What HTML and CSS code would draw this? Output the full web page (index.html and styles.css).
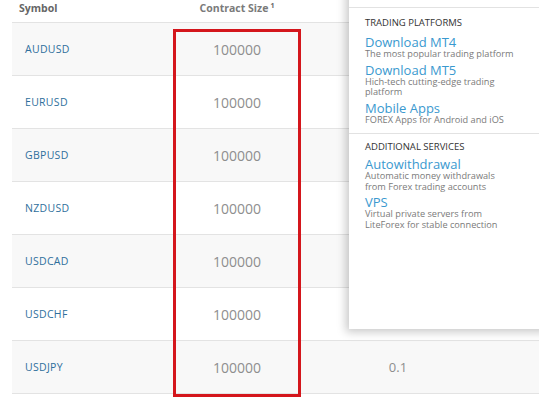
FILE: index.html
```html
<!DOCTYPE html>
<html>
<head>
<meta charset="utf-8">
<link rel="stylesheet" href="styles.css">
</head>
<body>
<div class="page">
  <div class="table">
    <div class="row head">
      <div class="c1">Symbol</div>
      <div class="c2">Contract Size<sup>1</sup></div>
      <div class="c3"></div>
    </div>
    <div class="row odd"><div class="c1 sym">AUDUSD</div><div class="c2 num">100000</div><div class="c3"></div></div>
    <div class="row"><div class="c1 sym">EURUSD</div><div class="c2 num">100000</div><div class="c3"></div></div>
    <div class="row odd"><div class="c1 sym">GBPUSD</div><div class="c2 num">100000</div><div class="c3"></div></div>
    <div class="row"><div class="c1 sym">NZDUSD</div><div class="c2 num">100000</div><div class="c3"></div></div>
    <div class="row odd"><div class="c1 sym">USDCAD</div><div class="c2 num">100000</div><div class="c3"></div></div>
    <div class="row"><div class="c1 sym">USDCHF</div><div class="c2 num">100000</div><div class="c3"></div></div>
    <div class="row odd"><div class="c1 sym">USDJPY</div><div class="c2 num">100000</div><div class="c3 num small">0.1</div></div>
  </div>

  <div class="highlight"></div>

  <div class="menu">
    <div class="menu-top"><span>Trading Terms</span></div>
    <div class="section">
      <div class="sec-title">TRADING PLATFORMS</div>
      <div class="item"><div class="link">Download MT4</div><div class="desc">The most popular trading platform</div></div>
      <div class="item"><div class="link">Download MT5</div><div class="desc">Hich-tech cutting-edge trading<br>platform</div></div>
      <div class="item"><div class="link">Mobile Apps</div><div class="desc">FOREX Apps for Android and iOS</div></div>
    </div>
    <div class="section">
      <div class="sec-title">ADDITIONAL SERVICES</div>
      <div class="item"><div class="link">Autowithdrawal</div><div class="desc">Automatic money withdrawals<br>from Forex trading accounts</div></div>
      <div class="item"><div class="link">VPS</div><div class="desc">Virtual private servers from<br>LiteForex for stable connection</div></div>
    </div>
  </div>
</div>
</body>
</html>
```

FILE: styles.css
```css
html, body {
  margin: 0;
  padding: 0;
  background: #ffffff;
  overflow: hidden;
}
body {
  font-family: "Open Sans", "Liberation Sans", sans-serif;
  width: 539px;
  height: 399px;
}
.page {
  position: relative;
  width: 539px;
  height: 399px;
  overflow: hidden;
}
.table {
  margin-left: 12px;
  width: 560px;
}
.row {
  display: grid;
  grid-template-columns: 150px 150px 172px 1fr;
  height: 52px;
  align-items: center;
  border-bottom: 1px solid #e3e3e3;
  background: #ffffff;
}
.row.odd {
  background: #f8f8f8;
}
.row.head {
  height: 22px;
  align-items: start;
  background: #ffffff;
}
.head .c1 {
  padding-left: 7px;
  font-weight: 700;
  font-size: 10.5px;
  color: #666666;
  line-height: 16px;
}
.head .c2 {
  text-align: center;
  font-weight: 700;
  font-size: 10.5px;
  color: #7a7a7a;
  line-height: 16px;
}
.head sup {
  font-size: 7px;
  margin-left: 2px;
  vertical-align: 4px;
  line-height: 0;
  color: #666;
}
.sym {
  padding-left: 13px;
  font-size: 10.5px;
  color: #2f6f9c;
  letter-spacing: 0.3px;
}
.num {
  text-align: center;
  font-size: 14px;
  color: #8e8e8e;
}
.num.small {
  font-size: 13px;
}
.highlight {
  position: absolute;
  left: 173px;
  top: 29px;
  width: 122px;
  height: 362px;
  border: 3px solid #d4161c;
}
.menu {
  position: absolute;
  left: 349px;
  top: -14px;
  width: 215px;
  height: 343px;
  background: #ffffff;
  box-shadow: -3px 3px 9px rgba(0, 0, 0, 0.22);
}
.menu-top {
  height: 21px;
  border-bottom: 1px solid #e2e2e2;
  padding-left: 16px;
  font-size: 10px;
  color: #d0d0d0;
  line-height: 14px;
}
.section {
  padding: 9px 16px 5px 16px;
  border-bottom: 1px solid #e2e2e2;
}
.section:last-child {
  border-bottom: none;
  padding-top: 7px;
}
.sec-title {
  font-size: 9.5px;
  color: #333333;
  line-height: 12px;
  margin-bottom: 6px;
}
.section:last-child .sec-title {
  margin-bottom: 4px;
}
.item {
  margin-bottom: 3px;
}
.link {
  font-size: 13px;
  color: #3a99cf;
  line-height: 14px;
}
.desc {
  font-size: 9.2px;
  color: #7a7a7a;
  line-height: 10.5px;
}
```
